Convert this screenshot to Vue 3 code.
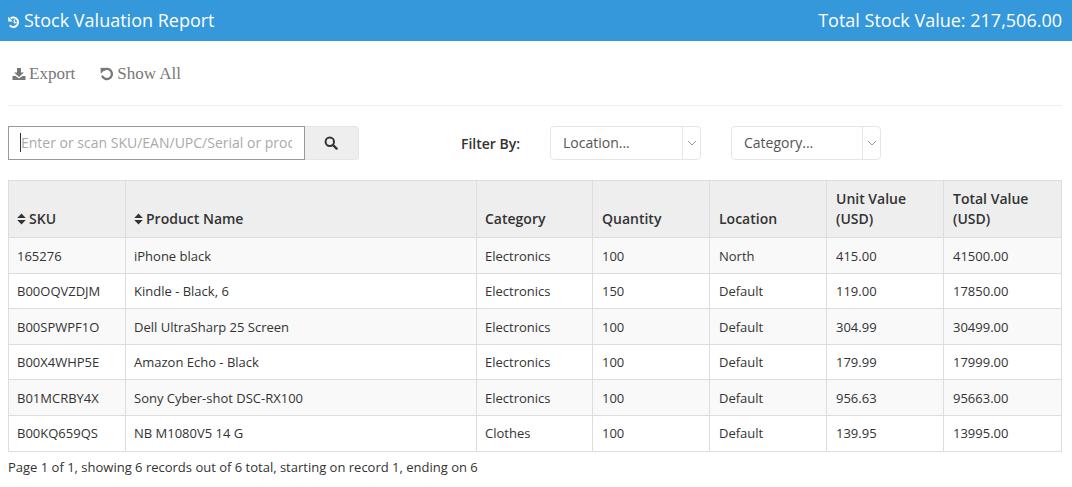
<script setup>
const columns = [
  { key: 'sku', label: 'SKU', width: 117, sort: true },
  { key: 'name', label: 'Product Name', width: 351, sort: true },
  { key: 'cat', label: 'Category', width: 116 },
  { key: 'qty', label: 'Quantity', width: 117 },
  { key: 'loc', label: 'Location', width: 117 },
  { key: 'unit', label: 'Unit Value (USD)', width: 117 },
  { key: 'total', label: 'Total Value (USD)', width: 118 }
]
const rows = [
  { sku: '165276', name: 'iPhone black', cat: 'Electronics', qty: 100, loc: 'North', unit: '415.00', total: '41500.00' },
  { sku: 'B00OQVZDJM', name: 'Kindle - Black, 6', cat: 'Electronics', qty: 150, loc: 'Default', unit: '119.00', total: '17850.00' },
  { sku: 'B00SPWPF1O', name: 'Dell UltraSharp 25 Screen', cat: 'Electronics', qty: 100, loc: 'Default', unit: '304.99', total: '30499.00' },
  { sku: 'B00X4WHP5E', name: 'Amazon Echo - Black', cat: 'Electronics', qty: 100, loc: 'Default', unit: '179.99', total: '17999.00' },
  { sku: 'B01MCRBY4X', name: 'Sony Cyber-shot DSC-RX100', cat: 'Electronics', qty: 100, loc: 'Default', unit: '956.63', total: '95663.00' },
  { sku: 'B00KQ659QS', name: 'NB M1080V5 14 G', cat: 'Clothes', qty: 100, loc: 'Default', unit: '139.95', total: '13995.00' }
]
</script>

<template>
  <div class="page">
    <header class="topbar">
      <h1 class="title">
        <svg class="history" viewBox="0 0 12 12" width="12" height="12">
          <path d="M2.6 2.4 A4.7 4.7 0 1 1 1.8 9.4" fill="none" stroke="#fff" stroke-width="2" />
          <path d="M0.2 0.8 L4.8 5.4 L0.2 5.4 Z" fill="#fff" />
          <path d="M6.4 3.6 V6.6 H8.8" fill="none" stroke="#fff" stroke-width="1.4" />
        </svg>
        Stock Valuation Report
      </h1>
      <div class="total">Total Stock Value: 217,506.00</div>
    </header>

    <main class="content">
      <div class="actions">
        <a class="action">
          <svg viewBox="0 0 14 14" width="14" height="14">
            <path d="M5 1 H9 V5.5 H12 L7 10 L2 5.5 H5 Z" fill="#777" />
            <path d="M0.5 9 H3.5 L7 11.5 L10.5 9 H13.5 V13 H0.5 Z" fill="#777" />
          </svg>
          Export
        </a>
        <a class="action">
          <svg viewBox="0 0 14 14" width="14" height="14">
            <path d="M3.4 3.2 A5.1 5.1 0 1 1 2 8.6" fill="none" stroke="#777" stroke-width="2.3" />
            <path d="M0.6 0.8 L6.6 1 L0.8 6.8 Z" fill="#777" />
          </svg>
          Show All
        </a>
      </div>

      <div class="filters">
        <div class="search">
          <div class="search-box">
            <input class="search-input" type="text" placeholder="Enter or scan SKU/EAN/UPC/Serial or product name" />
            <span class="caret"></span>
          </div>
          <button class="search-btn" type="button" aria-label="Search">
            <svg viewBox="0 0 14 14" width="14" height="14">
              <circle cx="5.8" cy="5.8" r="4.2" fill="none" stroke="#333" stroke-width="2" />
              <path d="M9 9 L12.6 12.6" stroke="#333" stroke-width="2.4" stroke-linecap="round" />
            </svg>
          </button>
        </div>
        <span class="filter-label">Filter By:</span>
        <div class="select select-location">
          <span class="select-value">Location...</span>
          <span class="select-arrow">
            <svg viewBox="0 0 10 6" width="10" height="6">
              <path d="M1 1 L5 5 L9 1" fill="none" stroke="#999" stroke-width="1" />
            </svg>
          </span>
        </div>
        <div class="select select-category">
          <span class="select-value">Category...</span>
          <span class="select-arrow">
            <svg viewBox="0 0 10 6" width="10" height="6">
              <path d="M1 1 L5 5 L9 1" fill="none" stroke="#999" stroke-width="1" />
            </svg>
          </span>
        </div>
      </div>

      <table class="grid">
        <colgroup>
          <col v-for="c in columns" :key="c.key" :style="{ width: c.width + 'px' }" />
        </colgroup>
        <thead>
          <tr>
            <th v-for="c in columns" :key="c.key">
              <svg v-if="c.sort" class="sort" viewBox="0 0 9 12" width="9" height="12">
                <path d="M4.5 0.5 L8.8 5 H0.2 Z M4.5 11.5 L8.8 7 H0.2 Z" fill="#333" />
              </svg><span v-if="c.sort" class="sort-gap"></span>{{ c.label }}
            </th>
          </tr>
        </thead>
        <tbody>
          <tr v-for="r in rows" :key="r.sku">
            <td v-for="c in columns" :key="c.key">{{ r[c.key] }}</td>
          </tr>
        </tbody>
      </table>

      <p class="summary">Page 1 of 1, showing 6 records out of 6 total, starting on record 1, ending on 6</p>
    </main>
  </div>
</template>

<style>
html, body { margin: 0; background: #fff; }
</style>

<style scoped>
.page {
  width: 1072px;
  font-family: "Open Sans", sans-serif;
  font-size: 13px;
  line-height: 1.42857;
  color: #333;
}
.topbar {
  height: 41px;
  box-sizing: border-box;
  background: #3498db;
  color: #fff;
  display: flex;
  align-items: center;
  justify-content: space-between;
  padding: 0 10px 0 8px;
}
.title {
  margin: 0;
  font-size: 18px;
  font-weight: 400;
  line-height: 41px;
  display: flex;
  align-items: center;
  gap: 4px;
}
.history { margin-top: 3px; }
.total { font-size: 18px; line-height: 41px; }
.content { padding: 0 10px 0 8px; }
.actions {
  height: 65px;
  box-sizing: border-box;
  border-bottom: 1px solid #eee;
  display: flex;
  align-items: center;
  gap: 25px;
  padding: 2px 0 0 4px;
}
.action {
  font-family: "Liberation Serif", serif;
  font-size: 17px;
  color: #777;
  display: flex;
  align-items: center;
  gap: 3px;
}
.filters {
  display: flex;
  align-items: center;
  height: 34px;
  margin-top: 20px;
}
.search { display: flex; width: 351px; height: 34px; }
.search-box { position: relative; width: 297px; height: 34px; }
.search-input {
  display: block;
  width: 100%;
  height: 100%;
  box-sizing: border-box;
  margin: 0;
  border: 1px solid #999;
  border-radius: 0;
  outline: 0;
  padding: 0 12px 2px;
  font-family: inherit;
  font-size: 14px;
  background: #fff;
}
.search-input::placeholder { color: #aaa; opacity: 1; }
.caret {
  position: absolute;
  left: 12px;
  top: 7px;
  width: 1px;
  height: 19px;
  background: #333;
}
.search-btn {
  width: 54px;
  height: 34px;
  margin: 0;
  padding: 0 2px 0 0;
  background: #eee;
  border: 1px solid #e6e6e6;
  border-left: 0;
  border-radius: 0 4px 4px 0;
  display: flex;
  align-items: center;
  justify-content: center;
}
.filter-label {
  margin-left: 102px;
  width: 89px;
  font-size: 14px;
  font-weight: 600;
  padding-top: 2px;
}
.select {
  height: 34px;
  box-sizing: border-box;
  border: 1px solid #e6e6e6;
  border-radius: 4px;
  display: flex;
  font-size: 14px;
  color: #555;
  line-height: 31px;
}
.select-location { width: 151px; }
.select-category { width: 150px; margin-left: 30px; }
.select-value { flex: 1; padding-left: 12px; }
.select-arrow {
  width: 17px;
  border-left: 1px solid #e6e6e6;
  display: flex;
  align-items: center;
  justify-content: center;
}
.grid {
  width: 1053px;
  table-layout: fixed;
  border-collapse: collapse;
  margin-top: 20px;
}
.grid th, .grid td {
  border: 1px solid #ddd;
  padding: 8px;
  text-align: left;
}
.grid td { padding-top: 8.4px; padding-bottom: 7.6px; }
.grid th:nth-child(n+4), .grid td:nth-child(n+4) { padding-left: 9px; }
.grid th {
  background: #eee;
  font-size: 14px;
  font-weight: 600;
  vertical-align: bottom;
  padding-bottom: 8.3px;
}
.grid td { vertical-align: top; }
.grid tbody tr:nth-child(odd) { background: #f9f9f9; }
.sort { vertical-align: -1px; }
.sort-gap { display: inline-block; width: 3px; }
.summary { margin: 6px 0 0; }
</style>
